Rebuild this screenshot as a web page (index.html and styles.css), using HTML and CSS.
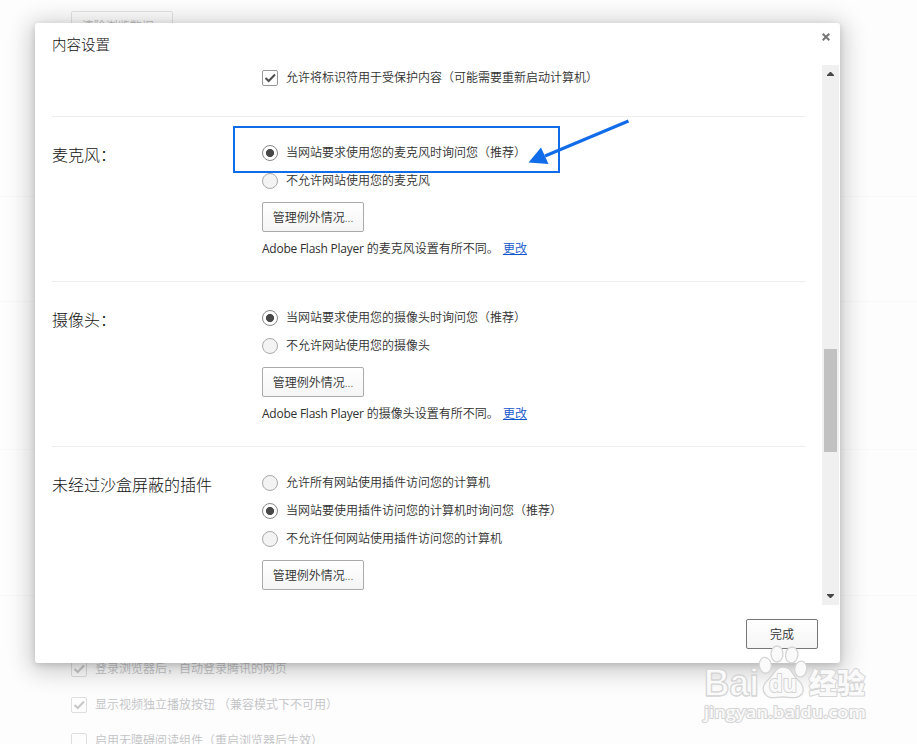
FILE: index.html
```html
<!DOCTYPE html>
<html lang="zh-CN">
<head>
    <meta charset="UTF-8">
    <meta name="viewport" content="width=device-width, initial-scale=1.0">
    <title>内容设置</title>
    <link rel="stylesheet" href="styles.css">
</head>
<body>
<div class="settings-page">
    <div class="block block-privacy"><span class="button">清除浏览数据...</span></div>
    <div class="block block-small"></div>
    <div class="block block-large"></div>
    <div class="block block-medium"></div>
    <div class="options">
        <div class="option">
            <span class="checkbox"><svg viewBox="0 0 16 16"><path d="M3.5 8 L6.7 11 L13 4.5"/></svg></span>
            <label>登录浏览器后，自动登录腾讯的网页</label>
        </div>
        <div class="option">
            <span class="checkbox"><svg viewBox="0 0 16 16"><path d="M3.5 8 L6.7 11 L13 4.5"/></svg></span>
            <label>显示视频独立播放按钮 （兼容模式下不可用）</label>
        </div>
        <div class="option">
            <span class="checkbox"></span>
            <label>启用无障碍阅读组件（重启浏览器后生效）</label>
        </div>
    </div>
</div>

<div class="dialog">
    <svg class="close" viewBox="0 0 8 8"><path d="M0.7 0.7 L7.3 7.3 M7.3 0.7 L0.7 7.3"/></svg>
    <h1>内容设置</h1>
    <div class="content">
        <div class="sections">
            <section class="first">
                <h3></h3>
                <div>
                    <div class="row">
                        <span class="checkbox"><svg viewBox="0 0 16 16"><path d="M3.5 8 L6.7 11 L13 4.5"/></svg></span>
                        <label>允许将标识符用于受保护内容（可能需要重新启动计算机）</label>
                    </div>
                </div>
            </section>
            <section>
                <h3>麦克风：</h3>
                <div>
                    <div class="row"><span class="radio checked"></span><label>当网站要求使用您的麦克风时询问您（推荐）</label></div>
                    <div class="row"><span class="radio"></span><label>不允许网站使用您的麦克风</label></div>
                    <span class="button">管理例外情况...</span>
                    <p><span class="en">Adobe Flash Player</span> 的麦克风设置有所不同。 <a href="#">更改</a></p>
                </div>
            </section>
            <section>
                <h3>摄像头：</h3>
                <div>
                    <div class="row"><span class="radio checked"></span><label>当网站要求使用您的摄像头时询问您（推荐）</label></div>
                    <div class="row"><span class="radio"></span><label>不允许网站使用您的摄像头</label></div>
                    <span class="button">管理例外情况...</span>
                    <p><span class="en">Adobe Flash Player</span> 的摄像头设置有所不同。 <a href="#">更改</a></p>
                </div>
            </section>
            <section class="last">
                <h3>未经过沙盒屏蔽的插件</h3>
                <div>
                    <div class="row"><span class="radio"></span><label>允许所有网站使用插件访问您的计算机</label></div>
                    <div class="row"><span class="radio checked"></span><label>当网站要使用插件访问您的计算机时询问您（推荐）</label></div>
                    <div class="row"><span class="radio"></span><label>不允许任何网站使用插件访问您的计算机</label></div>
                    <span class="button">管理例外情况...</span>
                </div>
            </section>
        </div>
        <div class="scrollbar">
            <svg viewBox="0 0 7 4"><path d="M0 4 V3 L3 0 H4 L7 3 V4 Z"/></svg>
            <div class="thumb"></div>
            <svg viewBox="0 0 7 4"><path d="M0 0 V1 L3 4 H4 L7 1 V0 Z"/></svg>
        </div>
    </div>
    <footer><span class="button done">完成</span></footer>
</div>

<!-- 标注框和箭头 -->
<div class="mark"></div>
<svg class="arrow" viewBox="0 0 104 50">
    <path class="line" d="M100.500 3 L17 38"/>
    <path class="head" d="M0.500 44.500 L13 29.500 L20.500 46 Z"/>
</svg>

<!-- 水印 -->
<svg class="watermark" viewBox="0 0 175 86">
    <text class="logo" x="4" y="56" textLength="55" lengthAdjust="spacingAndGlyphs">Bai</text>
    <ellipse cx="65.3" cy="25.3" rx="6" ry="8" transform="rotate(-8 65.3 25.3)"/>
    <ellipse cx="77" cy="14" rx="6" ry="8"/>
    <ellipse cx="91.7" cy="15" rx="6.2" ry="8" transform="rotate(8 91.7 15)"/>
    <ellipse cx="100.7" cy="29" rx="6" ry="8" transform="rotate(8 100.7 29)"/>
    <path d="M83 27 C76 27 74 34 69 39 C64 43 61 49 65 54 C69 60 76 57 83 57 C90 57 97 60 102 54 C105 49 102 43 97 39 C92 34 91 27 83 27 Z"/>
    <text class="du" x="69" y="52" textLength="28" lengthAdjust="spacingAndGlyphs">du</text>
    <text class="cn" x="109" y="54">经验</text>
    <text class="url" x="4" y="78" textLength="162" lengthAdjust="spacingAndGlyphs">jingyan.baidu.com</text>
</svg>
</body>
</html>
```

FILE: styles.css
```css
body {
    margin: 0;
    height: 744px;
    position: relative;
    overflow: hidden;
    background-color: #fdfdfd;
    color: #303030;
    font-family: "Open Sans", "Noto Sans CJK SC", sans-serif;
    font-size: 12px;
    font-weight: 350;
}
.block {
    box-sizing: border-box;
    border-bottom: 1px solid #f8f8f8;
}
.block-privacy {
    height: 197px;
    padding: 11px 0 0 71px;
}
.block-small {
    height: 105px;
}
.block-large {
    height: 148px;
}
.block-medium {
    height: 146px;
}
.block .button {
    opacity: 0.3;
}
.options {
    padding: 55px 0 0 71px;
    color: #c2c3c5;
}
.option {
    display: flex;
    align-items: center;
    gap: 8px;
    height: 36px;
}
.option .checkbox {
    opacity: 0.3;
}
.button {
    box-sizing: border-box;
    display: flex;
    align-items: center;
    justify-content: center;
    width: 102px;
    height: 30px;
    border: 1px solid #aaa;
    border-radius: 2px;
    background: linear-gradient(#fff, #f5f5f5);
}
.checkbox,
.radio {
    box-sizing: border-box;
    flex: none;
    width: 16px;
    height: 16px;
    border: 1px solid #999;
    border-radius: 2px;
    background-color: #fff;
}
.checkbox svg {
    display: block;
    width: 16px;
    height: 16px;
    margin: -1px;
    fill: none;
    stroke: #4d4d4d;
    stroke-width: 2;
}
.radio {
    border-color: #aaa;
    border-radius: 50%;
    background-color: #f3f3f3;
}
.radio.checked {
    border-color: #888;
    background: radial-gradient(circle, #484848 3.7px, #fff 4.4px);
}
.dialog {
    position: absolute;
    left: 35px;
    top: 23px;
    width: 805px;
    height: 640px;
    border-radius: 3px;
    background-color: #fff;
    box-shadow: 0 4px 23px 5px rgba(0, 0, 0, 0.2), 0 2px 6px rgba(0, 0, 0, 0.15);
}
.close {
    position: absolute;
    right: 10px;
    top: 10px;
    width: 8px;
    height: 8px;
    stroke: #777;
    stroke-width: 2;
}
h1 {
    box-sizing: border-box;
    height: 42px;
    margin: 0;
    padding: 12px 17px 0;
    color: #111;
    font-size: 14.5px;
    font-weight: 300;
    line-height: 20px;
}
.content {
    display: flex;
    justify-content: space-between;
    height: 540px;
    padding: 0 1px 0 17px;
}
.sections {
    width: 754px;
}
section {
    box-sizing: border-box;
    display: flex;
    height: 165px;
    padding-top: 22px;
    border-bottom: 1px solid #eee;
}
section.first {
    height: 52px;
    padding-top: 0;
}
section.first .row {
    height: 26px;
}
section.last {
    border: none;
}
h3 {
    width: 210px;
    margin: 4px 0 0;
    color: #111;
    font-size: 16px;
    font-weight: 300;
    line-height: 24px;
}
.row {
    display: flex;
    align-items: center;
    gap: 8px;
    height: 28px;
}
.row label,
.option label {
    padding-bottom: 2px;
}
.row + .button {
    margin-top: 7px;
}
p {
    margin: 7px 0 0;
    line-height: 20px;
}
.en {
    font-weight: 400;
    letter-spacing: -0.24px;
}
a {
    margin-left: 1px;
    color: #15c;
}
.scrollbar {
    box-sizing: border-box;
    display: flex;
    flex-direction: column;
    align-items: center;
    width: 17px;
    padding: 7px 0;
    background-color: #f0f0f0;
}
.scrollbar svg {
    width: 7px;
    height: 4px;
    fill: #484848;
}
.thumb {
    width: 13px;
    height: 103px;
    margin: 273px 0 142px;
    background-color: #c1c1c1;
}
footer {
    display: flex;
    justify-content: flex-end;
    padding: 14px 22px 0;
}
.button.done {
    width: 72px;
    border-color: #777;
}
.mark {
    position: absolute;
    box-sizing: border-box;
    left: 233px;
    top: 126px;
    width: 327px;
    height: 47px;
    border: 2px solid #106ce8;
}
.arrow {
    position: absolute;
    left: 528px;
    top: 118px;
    width: 104px;
    height: 50px;
}
.arrow .line {
    fill: none;
    stroke: #106ce8;
    stroke-width: 3;
}
.arrow .head {
    fill: #106ce8;
}
.watermark {
    position: absolute;
    left: 700px;
    top: 640px;
    width: 175px;
    height: 86px;
    fill: #fafafa;
    stroke: #d4d4d4;
    stroke-width: 1.3;
    stroke-linejoin: round;
}
.watermark text {
    font-family: "Open Sans", "Noto Sans CJK SC", sans-serif;
    font-weight: 700;
    stroke-width: 2;
    paint-order: stroke;
}
.watermark .logo {
    font-family: "Liberation Sans", sans-serif;
    font-size: 38px;
    stroke-width: 1.3;
    paint-order: normal;
}
.watermark .du {
    font-size: 23px;
}
.watermark .cn {
    font-size: 28px;
    font-weight: 900;
}
.watermark .url {
    font-size: 17px;
    font-weight: 600;
}
```
